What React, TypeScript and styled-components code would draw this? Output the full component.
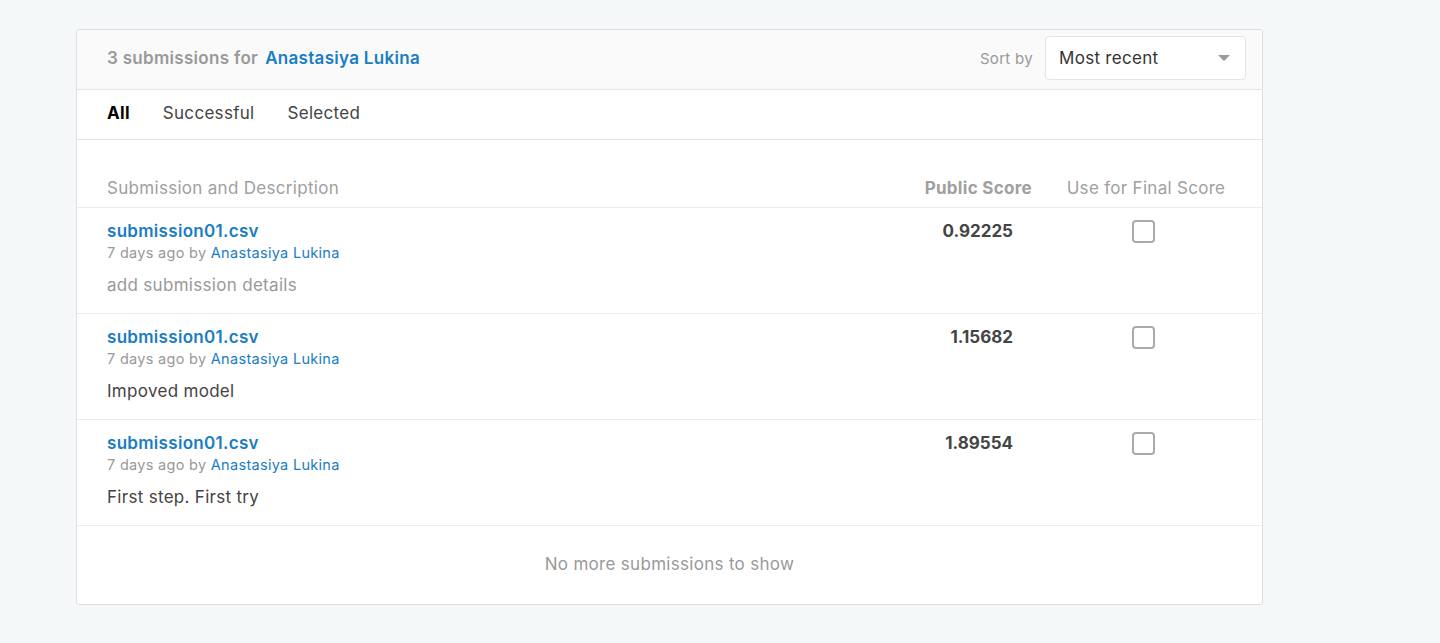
import React from 'react'
import styled, {createGlobalStyle} from 'styled-components'

const GlobalStyle = createGlobalStyle`
  html, body {
    margin: 0;
    padding: 0;
    background: #f5f8f9;
    font-family: Inter, "Open Sans", Arial, sans-serif;
    letter-spacing: 0.3px;
    -webkit-font-smoothing: antialiased;
  }
`

const Page = styled.div`
  padding: 29px 0 38px 76px;
  min-height: 643px;
  box-sizing: border-box;
`

const Card = styled.div`
  width: 1187px;
  box-sizing: border-box;
  background: #fff;
  border: 1px solid #dedfe0;
  border-radius: 3px;
`

const Header = styled.div`
  height: 60px;
  display: flex;
  align-items: center;
  justify-content: space-between;
  padding: 0 16px 3px 30px;
  box-sizing: border-box;
  background: #fafafa;
  border-bottom: 1px solid #e4e5e6;
  border-radius: 3px 3px 0 0;
`

const Title = styled.div`
  font-size: 17px;
  font-weight: 600;
  color: #999;
  display: flex;
  gap: 7px;
`

const Link = styled.a<{$bold?: boolean}>`
  color: #1a7dc2;
  text-decoration: none;
  font-weight: ${(p) => (p.$bold ? 600 : 400)};
`

const SortWrap = styled.div`
  display: flex;
  align-items: center;
  gap: 12px;
`

const SortLabel = styled.span`
  font-size: 15px;
  color: #999;
`

const Select = styled.div`
  width: 201px;
  height: 44px;
  box-sizing: border-box;
  border: 1px solid #e4e5e6;
  border-radius: 4px;
  background: #fff;
  display: flex;
  align-items: center;
  justify-content: space-between;
  padding: 0 15px 0 13px;
  font-size: 17px;
  color: #333;
`

const Caret = styled.span`
  width: 0;
  height: 0;
  border-left: 6px solid transparent;
  border-right: 6px solid transparent;
  border-top: 6px solid #999;
`

const Tabs = styled.div`
  display: flex;
  align-items: center;
  gap: 33px;
  padding: 0 30px 4px;
  height: 45px;
  border-bottom: 1px solid #e4e5e6;
`

const Tab = styled.span<{$active?: boolean}>`
  font-size: 17px;
  color: ${(p) => (p.$active ? '#000' : '#444')};
  font-weight: ${(p) => (p.$active ? 700 : 400)};
`

const Grid = styled.div`
  display: grid;
  grid-template-columns: 1fr 140px 160px;
  column-gap: 34px;
`

const HeadRow = styled(Grid)`
  margin-top: 38px;
  height: 29px;
  align-items: start;
  padding: 0 36px 0 30px;
  border-bottom: 1px solid #ececec;
`

const HeadCell = styled.span<{$bold?: boolean; $align?: string}>`
  font-size: 17px;
  color: #a0a0a0;
  font-weight: ${(p) => (p.$bold ? 700 : 400)};
  text-align: ${(p) => p.$align || 'left'};
  white-space: nowrap;
`

const Row = styled(Grid)`
  height: 106px;
  padding: 12px 36px 0 30px;
  box-sizing: border-box;
  border-bottom: 1px solid #ececec;
`

const Name = styled.div`
  font-size: 17px;
  font-weight: 700;
  line-height: 22px;
`

const Meta = styled.div`
  font-size: 14.5px;
  color: #999;
  line-height: 21px;
`

const Desc = styled.div<{$muted?: boolean}>`
  font-size: 17px;
  color: ${(p) => (p.$muted ? '#999' : '#444')};
  margin-top: 12px;
`

const Score = styled.div`
  font-size: 17px;
  font-weight: 700;
  color: #444;
  letter-spacing: 0;
  text-align: right;
  line-height: 22px;
  padding-right: 19px;
`

const CheckCell = styled.div`
  display: flex;
  justify-content: center;
`

const Checkbox = styled.span`
  width: 23px;
  height: 23px;
  box-sizing: border-box;
  border: 2px solid #aaa;
  border-radius: 4px;
  margin-right: 6px;
`

const Footer = styled.div`
  height: 78px;
  display: flex;
  align-items: center;
  justify-content: center;
  padding-bottom: 2px;
  box-sizing: border-box;
  font-size: 17px;
  color: #999;
`

const submissions = [
  {score: '0.92225', desc: 'add submission details', muted: true},
  {score: '1.15682', desc: 'Impoved model'},
  {score: '1.89554', desc: 'First step. First try'},
]

export default function App() {
  return (
    <Page>
      <GlobalStyle />
      <Card>
        <Header>
          <Title>
            <span>3 submissions for</span>
            <Link $bold>Anastasiya Lukina</Link>
          </Title>
          <SortWrap>
            <SortLabel>Sort by</SortLabel>
            <Select>
              <span>Most recent</span>
              <Caret />
            </Select>
          </SortWrap>
        </Header>
        <Tabs>
          <Tab $active>All</Tab>
          <Tab>Successful</Tab>
          <Tab>Selected</Tab>
        </Tabs>
        <HeadRow>
          <HeadCell>Submission and Description</HeadCell>
          <HeadCell $bold $align="right">
            Public Score
          </HeadCell>
          <HeadCell $align="center">Use for Final Score</HeadCell>
        </HeadRow>
        {submissions.map((s, i) => (
          <Row key={i}>
            <div>
              <Name>
                <Link $bold>submission01.csv</Link>
              </Name>
              <Meta>
                7 days ago by <Link>Anastasiya Lukina</Link>
              </Meta>
              <Desc $muted={s.muted}>{s.desc}</Desc>
            </div>
            <Score>{s.score}</Score>
            <CheckCell>
              <Checkbox />
            </CheckCell>
          </Row>
        ))}
        <Footer>No more submissions to show</Footer>
      </Card>
    </Page>
  )
}
